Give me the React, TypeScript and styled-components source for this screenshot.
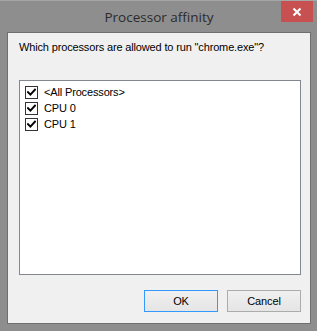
import React from 'react';
import styled, {createGlobalStyle} from 'styled-components';

const GlobalStyle = createGlobalStyle`
    html, body {
        margin: 0;
        padding: 0;
        background: #ffffff;
    }
`;

const processors = ["<All Processors>", "CPU 0", "CPU 1"];

const CheckMark = () => (
    <svg width="9" height="9" viewBox="0 0 9 9">
        <path d="M1 4.2 L3.4 6.6 L8 1.6" fill="none" stroke="#000" strokeWidth="2" strokeLinecap="square"/>
    </svg>
);

const CloseGlyph = () => (
    <svg width="10" height="10" viewBox="0 0 10 10">
        <path d="M1.5 1.5 L8.5 8.5 M8.5 1.5 L1.5 8.5" stroke="#fff" strokeWidth="2"/>
    </svg>
);

export default function App() {
    return (
        <>
            <GlobalStyle/>
            <Window>
                <TitleBar>
                    <Title>Processor affinity</Title>
                    <CloseButton><CloseGlyph/></CloseButton>
                </TitleBar>
                <Client>
                    <Prompt>Which processors are allowed to run "chrome.exe"?</Prompt>
                    <ListBox>
                        {processors.map((name) => (
                            <Row key={name}>
                                <Box><CheckMark/></Box>
                                <RowLabel>{name}</RowLabel>
                            </Row>
                        ))}
                    </ListBox>
                    <ButtonRow>
                        <Button $focused>OK</Button>
                        <Button>Cancel</Button>
                    </ButtonRow>
                </Client>
            </Window>
        </>
    );
}

const Window = styled.div`
    width: 317px;
    height: 331px;
    box-sizing: border-box;
    background: #8e8e8e;
    border-top: 1px solid #a6a6a6;
    padding: 0 6px 7px 7px;
    display: flex;
    flex-direction: column;
`;

const TitleBar = styled.div`
    position: relative;
    height: 31px;
    display: flex;
    align-items: center;
    justify-content: center;
`;

const Title = styled.div`
    font-family: "Open Sans", "Noto Sans", sans-serif;
    font-size: 13.5px;
    color: #2b2b2b;
`;

const CloseButton = styled.div`
    position: absolute;
    top: 0;
    left: 274px;
    width: 32px;
    height: 21px;
    background: #c75050;
    display: flex;
    align-items: center;
    justify-content: center;
`;

const Client = styled.div`
    flex: 1;
    background: #f0f0f0;
    border: 1px solid #6f6f6f;
    padding: 0 9px 0 11px;
    display: flex;
    flex-direction: column;
    font-family: "Liberation Sans", Arial, sans-serif;
    font-size: 11px;
    letter-spacing: -0.15px;
    color: #000;
`;

const Prompt = styled.div`
    margin-top: 7px;
    line-height: 15px;
    color: #000;
`;

const ListBox = styled.div`
    margin-top: 25px;
    height: 195px;
    box-sizing: border-box;
    background: #fff;
    border: 1px solid #828790;
    padding: 3px 0 0 5px;
`;

const Row = styled.div`
    height: 16px;
    display: flex;
    align-items: center;
    gap: 6px;
`;

const Box = styled.div`
    width: 13px;
    height: 13px;
    box-sizing: border-box;
    border: 1px solid #333;
    background: #fff;
    display: flex;
    align-items: center;
    justify-content: center;
`;

const RowLabel = styled.span`
    line-height: 16px;
`;

const ButtonRow = styled.div`
    margin-top: 15px;
    display: flex;
    justify-content: flex-end;
    gap: 9px;
`;

const Button = styled.div<{ $focused?: boolean }>`
    width: 74px;
    height: 22px;
    box-sizing: border-box;
    border: 1px solid ${(p) => (p.$focused ? "#3399ff" : "#acacac")};
    background: linear-gradient(#f0f0f0, #e5e5e5);
    display: flex;
    align-items: center;
    justify-content: center;
    color: #000;
`;
